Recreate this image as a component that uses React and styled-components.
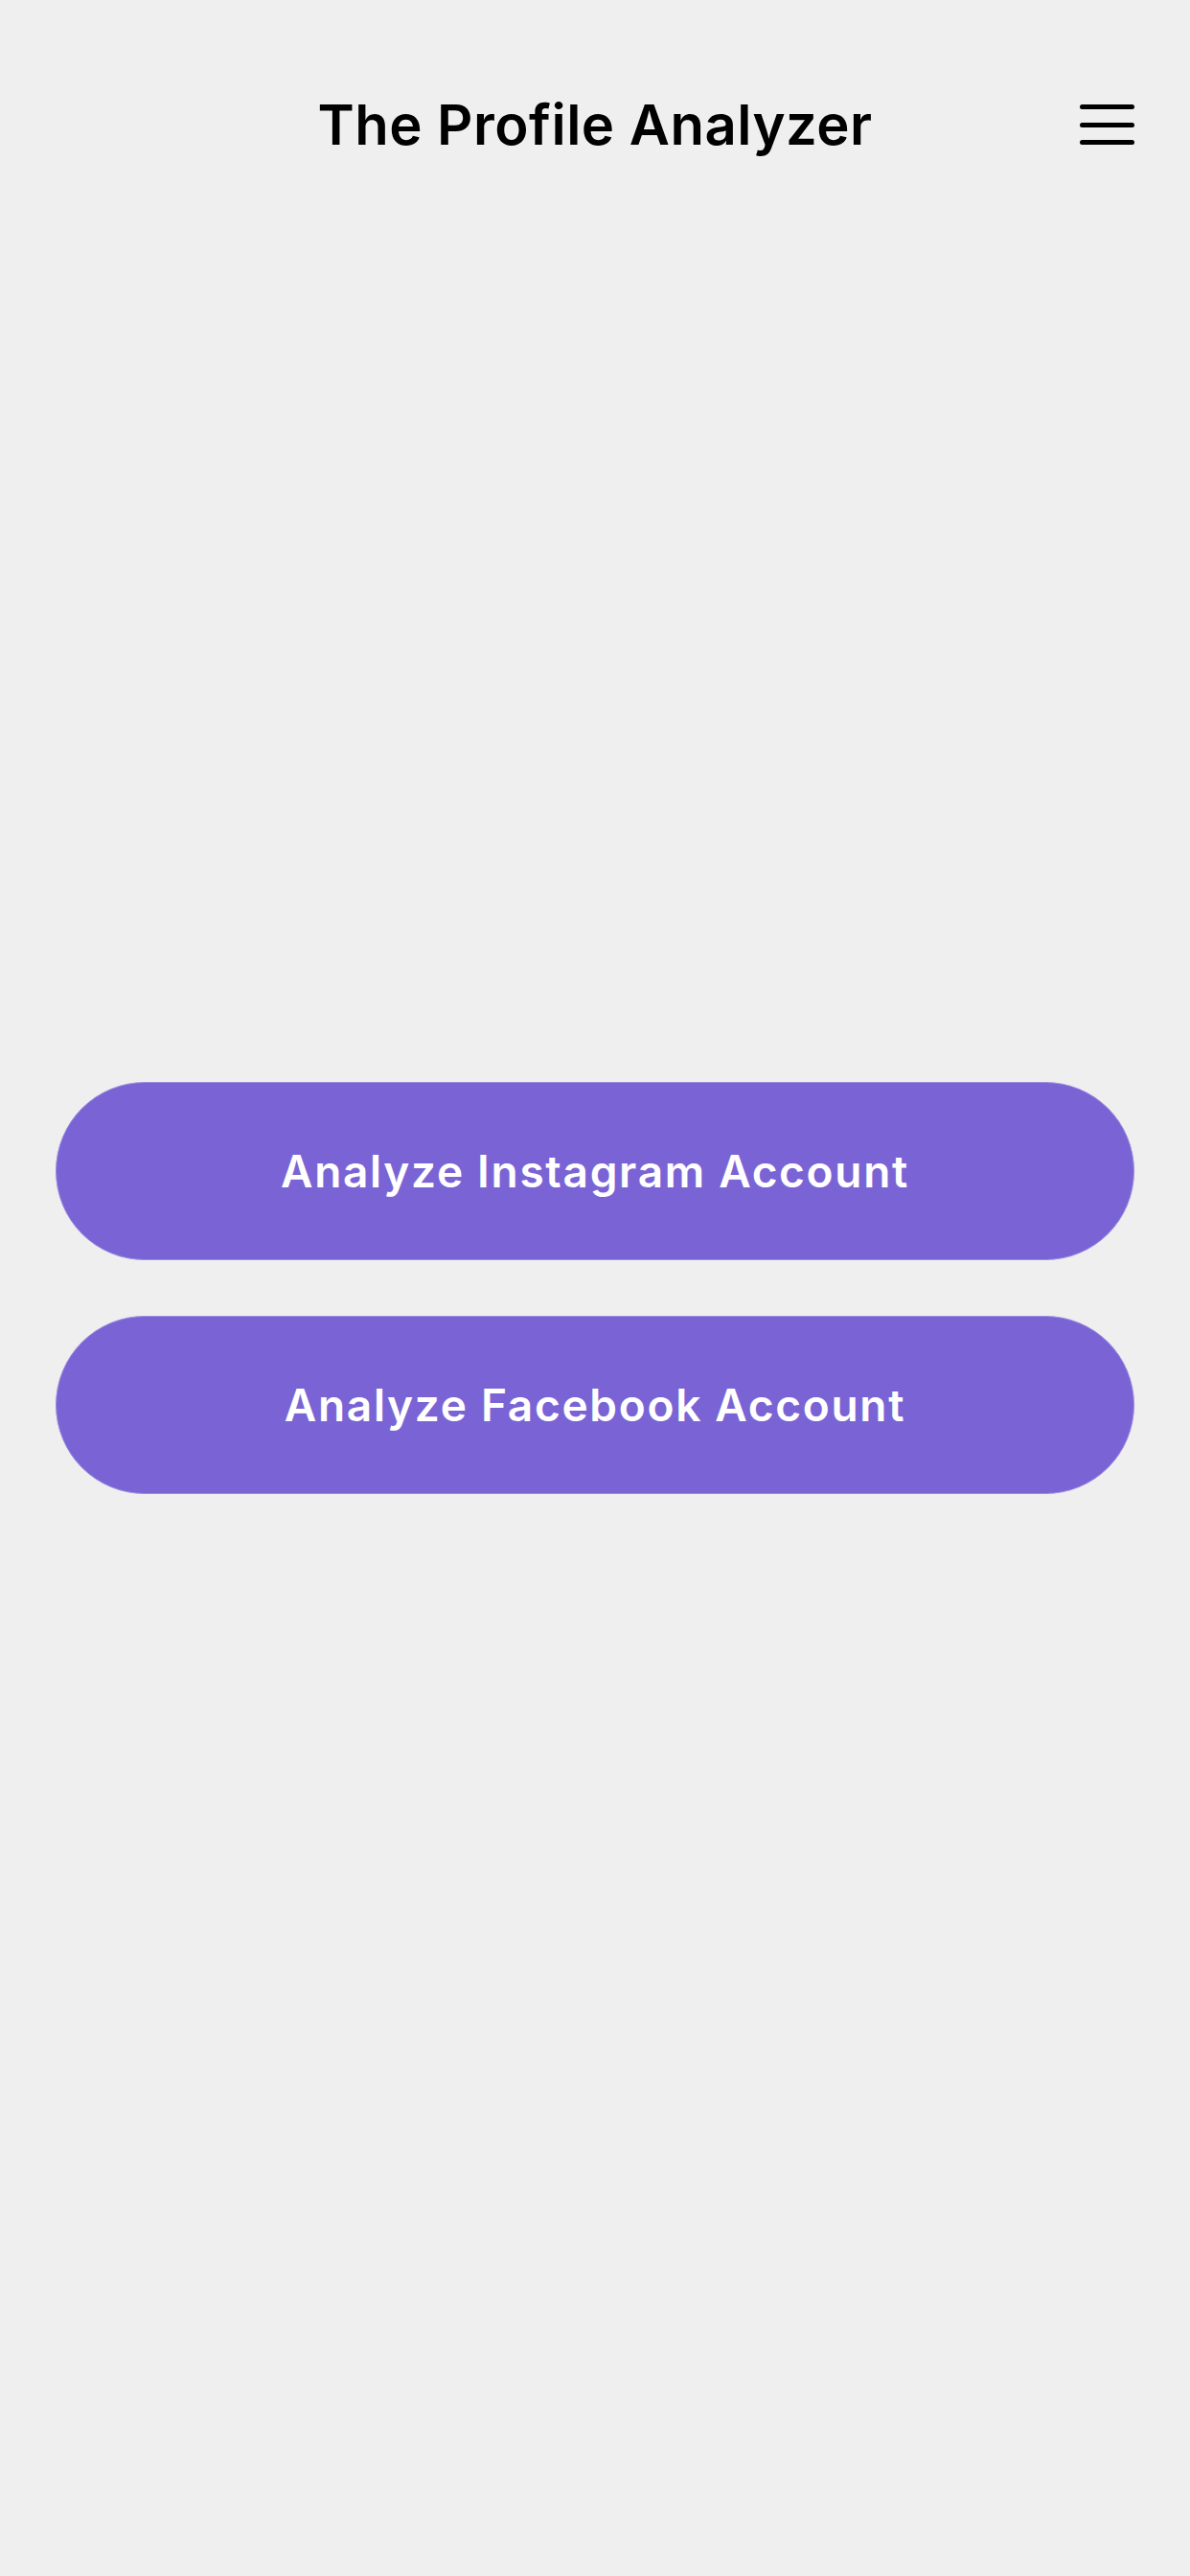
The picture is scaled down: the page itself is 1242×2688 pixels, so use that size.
import styled, { createGlobalStyle } from "styled-components";

const GlobalStyle = createGlobalStyle`
  html, body {
    margin: 0;
    padding: 0;
    background: #efefef;
  }
  * { box-sizing: border-box; }
`;

const Page = styled.div`
  height: 100vh;
  display: grid;
  grid-template-rows: 260px 1fr 260px;
  padding: 0 58px;
  font-family: Inter, "Noto Sans", sans-serif;
  background: #efefef;
`;

const Header = styled.header`
  display: grid;
  grid-template-columns: 57px 1fr 57px;
  align-items: center;
`;

const Title = styled.h1`
  grid-column: 2;
  margin: 0;
  text-align: center;
  font-size: 58px;
  font-weight: 600;
  color: #000;
  letter-spacing: 0.5px;
`;

const MenuButton = styled.button`
  grid-column: 3;
  width: 57px;
  height: 42px;
  padding: 0;
  border: none;
  background: none;
  display: flex;
  flex-direction: column;
  justify-content: space-between;
  cursor: pointer;
`;

const MenuLine = styled.span`
  display: block;
  height: 5px;
  width: 100%;
  border-radius: 3px;
  background: #000;
`;

const Actions = styled.main`
  display: flex;
  flex-direction: column;
  justify-content: center;
  gap: 58px;
`;

const ActionButton = styled.button`
  height: 186px;
  width: 100%;
  border: 1px solid #9c8de0;
  border-radius: 93px;
  background: #7a64d5;
  color: #fff;
  font-family: inherit;
  font-size: 46px;
  font-weight: 600;
  letter-spacing: 1.7px;
  cursor: pointer;
`;

export default function App() {
  return (
    <>
      <GlobalStyle />
      <Page>
        <Header>
          <Title>The Profile Analyzer</Title>
          <MenuButton aria-label="Menu">
            <MenuLine />
            <MenuLine />
            <MenuLine />
          </MenuButton>
        </Header>
        <Actions>
          <ActionButton>Analyze Instagram Account</ActionButton>
          <ActionButton>Analyze Facebook Account</ActionButton>
        </Actions>
        <div />
      </Page>
    </>
  );
}
